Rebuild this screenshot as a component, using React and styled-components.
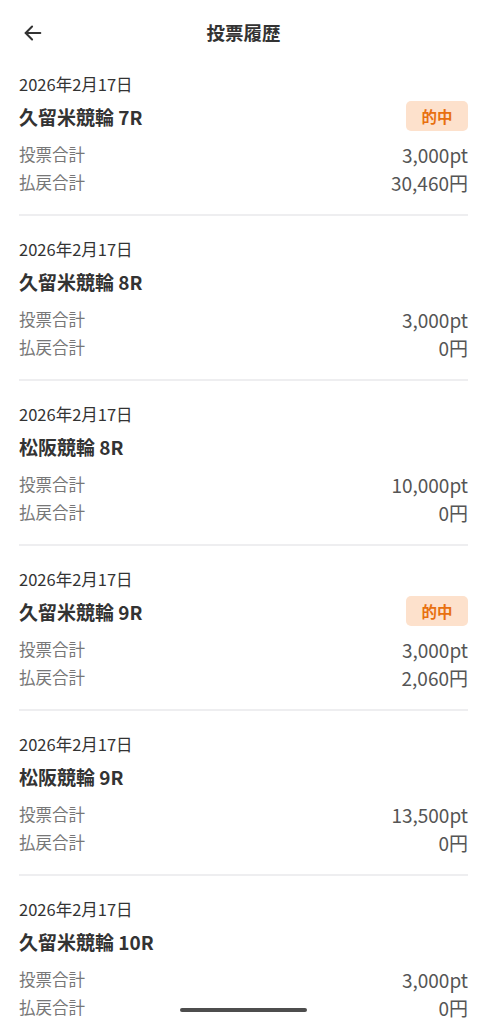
import React from "react";
import styled, { createGlobalStyle } from "styled-components";

const GlobalStyle = createGlobalStyle`
  html, body {
    margin: 0;
    padding: 0;
    background: #fff;
  }
  body {
    font-family: "Noto Sans CJK JP", "Noto Sans", sans-serif;
    color: #333;
  }
`;

const Page = styled.div`
  width: 100%;
  min-height: 100vh;
  background: #fff;
`;

const Header = styled.header`
  height: 66px;
  display: grid;
  grid-template-columns: 66px 1fr 66px;
  align-items: center;
`;

const BackButton = styled.button`
  border: 0;
  background: none;
  padding: 0 0 0 22px;
  display: flex;
  align-items: center;
  color: #333;
`;

const Title = styled.h1`
  margin: 0 0 3px;
  text-align: center;
  font-size: 18.5px;
  font-weight: 700;
  color: #333;
`;

const List = styled.ul`
  list-style: none;
  margin: 0;
  padding: 0 19px;
`;

const Card = styled.li`
  padding: 5px 0 18px;
  border-bottom: 2px solid #eeeef0;
  & + & {
    padding-top: 20px;
  }
`;

const DateText = styled.div`
  font-size: 16.5px;
  line-height: 26px;
  color: #333;
`;

const TitleRow = styled.div`
  display: flex;
  align-items: center;
  justify-content: space-between;
  height: 32px;
  margin: 3px 0 8px;
`;

const RaceName = styled.div`
  font-size: 19px;
  font-weight: 700;
  color: #333;
`;

const Badge = styled.span`
  display: inline-flex;
  align-items: center;
  justify-content: center;
  width: 62px;
  height: 30px;
  border-radius: 5px;
  background: #fde1cc;
  color: #e8700f;
  font-size: 15.5px;
  font-weight: 700;
`;

const Row = styled.div`
  display: flex;
  justify-content: space-between;
  align-items: center;
  height: 28px;
`;

const Label = styled.span`
  font-size: 16.5px;
  color: #777;
`;

const Value = styled.span`
  font-size: 19px;
  color: #555;
`;

const HomeIndicator = styled.div`
  position: fixed;
  left: 180px;
  bottom: 12px;
  width: 127px;
  height: 4px;
  border-radius: 2px;
  background: #4d4d4d;
`;

const records = [
  { race: "久留米競輪 7R", hit: true, bet: "3,000pt", payout: "30,460円" },
  { race: "久留米競輪 8R", hit: false, bet: "3,000pt", payout: "0円" },
  { race: "松阪競輪 8R", hit: false, bet: "10,000pt", payout: "0円" },
  { race: "久留米競輪 9R", hit: true, bet: "3,000pt", payout: "2,060円" },
  { race: "松阪競輪 9R", hit: false, bet: "13,500pt", payout: "0円" },
  { race: "久留米競輪 10R", hit: false, bet: "3,000pt", payout: "0円" },
];

export default function App() {
  return (
    <Page>
      <GlobalStyle />
      <Header>
        <BackButton aria-label="戻る">
          <svg width="22" height="22" viewBox="0 0 24 24" fill="none" stroke="currentColor" strokeWidth="2.2" strokeLinecap="round" strokeLinejoin="round">
            <path d="M20 12H4" />
            <path d="M11 5l-7 7 7 7" />
          </svg>
        </BackButton>
        <Title>投票履歴</Title>
        <span />
      </Header>
      <List>
        {records.map((r, i) => (
          <Card key={i}>
            <DateText>2026年2月17日</DateText>
            <TitleRow>
              <RaceName>{r.race}</RaceName>
              {r.hit && <Badge>的中</Badge>}
            </TitleRow>
            <Row>
              <Label>投票合計</Label>
              <Value>{r.bet}</Value>
            </Row>
            <Row>
              <Label>払戻合計</Label>
              <Value>{r.payout}</Value>
            </Row>
          </Card>
        ))}
      </List>
      <HomeIndicator />
    </Page>
  );
}
